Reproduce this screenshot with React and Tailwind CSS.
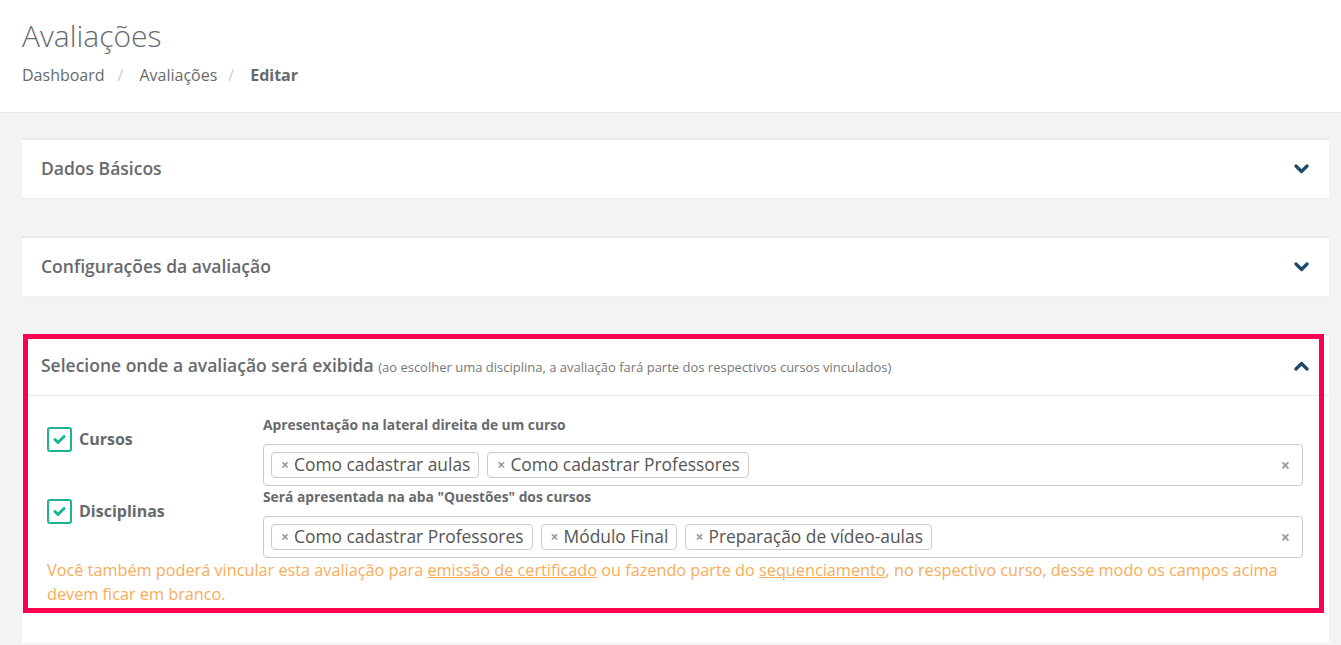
import React from "react";

const font = { fontFamily: "'Open Sans', 'Noto Sans', sans-serif" };

function ChevronDown() {
  return (
    <svg width="15" height="10" viewBox="0 0 15 10" className="block">
      <polyline points="2,2 7.5,7.5 13,2" fill="none" stroke="#1d4a6b" strokeWidth="3.2" strokeLinecap="round" strokeLinejoin="round" />
    </svg>
  );
}
function ChevronUp() {
  return (
    <svg width="15" height="10" viewBox="0 0 15 10" className="block">
      <polyline points="2,8 7.5,2.5 13,8" fill="none" stroke="#1d4a6b" strokeWidth="3.2" strokeLinecap="round" strokeLinejoin="round" />
    </svg>
  );
}

function Check() {
  return (
    <div className="w-[25px] h-[25px] border-2 border-[#1ab394] rounded-[3px] flex items-center justify-center shrink-0">
      <svg width="13" height="11" viewBox="0 0 13 11">
        <polyline points="2,5.5 5,8.5 11,2.5" fill="none" stroke="#1ab394" strokeWidth="3" strokeLinecap="round" strokeLinejoin="round" />
      </svg>
    </div>
  );
}

function Tag({ children }) {
  return (
    <div className="h-[26px] flex items-center border border-[#cccccc] rounded-[4px] pl-[9px] pr-[8px] bg-white">
      <span className="text-[#999] text-[14px] font-bold mr-[5px] leading-none">×</span>
      <span className="text-[17.4px] text-[#555] leading-none">{children}</span>
    </div>
  );
}

function Select({ tags }) {
  return (
    <div className="h-[42px] border border-[#cccccc] rounded-[4px] flex items-center pl-[7px] pr-[12px]">
      <div className="flex gap-[8px] flex-1">
        {tags.map((t) => (
          <Tag key={t}>{t}</Tag>
        ))}
      </div>
      <span className="text-[#999] text-[16px] font-bold leading-none">×</span>
    </div>
  );
}

function Panel({ title }) {
  return (
    <div className="bg-white border-t-2 border-[#e7eaec] border-b border-b-[#eceeef] h-[61px] flex items-center justify-between pl-[19px] pr-[20px]">
      <span className="text-[17.5px] font-semibold text-[#676a6c] leading-[24px] mt-[-3px]">{title}</span>
      <ChevronDown />
    </div>
  );
}

export default function App() {
  return (
    <div style={font} className="min-h-[645px] bg-[#f3f3f4] text-[#676a6c]">
      <div className="bg-white h-[113px] border-b border-[#e7eaec] px-[22px] pt-[14px]">
        <h1 className="text-[30px] font-light leading-[44px] text-[#676a6c]">Avaliações</h1>
        <div className="flex items-center text-[16px] mt-[6px] leading-[22px]">
          <span className="mr-[2px]">Dashboard</span>
          <span className="text-[#ccc] ml-[11px] mr-[16px]">/</span>
          <span>Avaliações</span>
          <span className="text-[#ccc] ml-[11px] mr-[16px]">/</span>
          <span className="font-bold">Editar</span>
        </div>
      </div>
      <div className="pt-[25px] pl-[22px] pr-[12px]">
        <Panel title="Dados Básicos" />
        <div className="h-[37px]" />
        <Panel title="Configurações da avaliação" />
        <div className="h-[39px]" />
        <div className="relative bg-white">
          <div className="h-[60px] border-b border-[#e7eaec] flex items-center justify-between pl-[19px] pr-[20px]">
            <span className="text-[17.5px] font-semibold text-[#676a6c] leading-[24px]">
              Selecione onde a avaliação será exibida{" "}
              <span className="text-[13px] font-normal text-[#777]">(ao escolher uma disciplina, a avaliação fará parte dos respectivos cursos vinculados)</span>
            </span>
            <ChevronUp />
          </div>
          <div className="pl-[25px] pr-[26px] pt-[20px] pb-[37px]">
            <div className="flex">
              <div className="w-[216px] pt-[11px] flex items-start gap-[7px]">
                <Check />
                <span className="text-[16px] font-bold leading-[24px]">Cursos</span>
              </div>
              <div className="flex-1">
                <div className="text-[13.8px] font-bold leading-[18px] mb-[10px]">Apresentação na lateral direita de um curso</div>
                <Select tags={["Como cadastrar aulas", "Como cadastrar Professores"]} />
              </div>
            </div>
            <div className="flex mt-[2px]">
              <div className="w-[216px] pt-[11px] flex items-start gap-[7px]">
                <Check />
                <span className="text-[16px] font-bold leading-[24px]">Disciplinas</span>
              </div>
              <div className="flex-1">
                <div className="text-[13.8px] font-bold leading-[18px] mb-[10px]">Será apresentada na aba "Questões" dos cursos</div>
                <Select tags={["Como cadastrar Professores", "Módulo Final", "Preparação de vídeo-aulas"]} />
              </div>
            </div>
            <p className="text-[16.25px] leading-[24px] text-[#f8ac59]">
              Você também poderá vincular esta avaliação para <span className="underline">emissão de certificado</span> ou fazendo parte do <span className="underline">sequenciamento</span>, no respectivo curso, desse modo os campos acima devem ficar em branco.
            </p>
          </div>
          <div className="absolute left-[1px] right-[5px] top-[-2px] h-[279px] border-[5px] border-[#ff0050] pointer-events-none" />
        </div>
      </div>
    </div>
  );
}
